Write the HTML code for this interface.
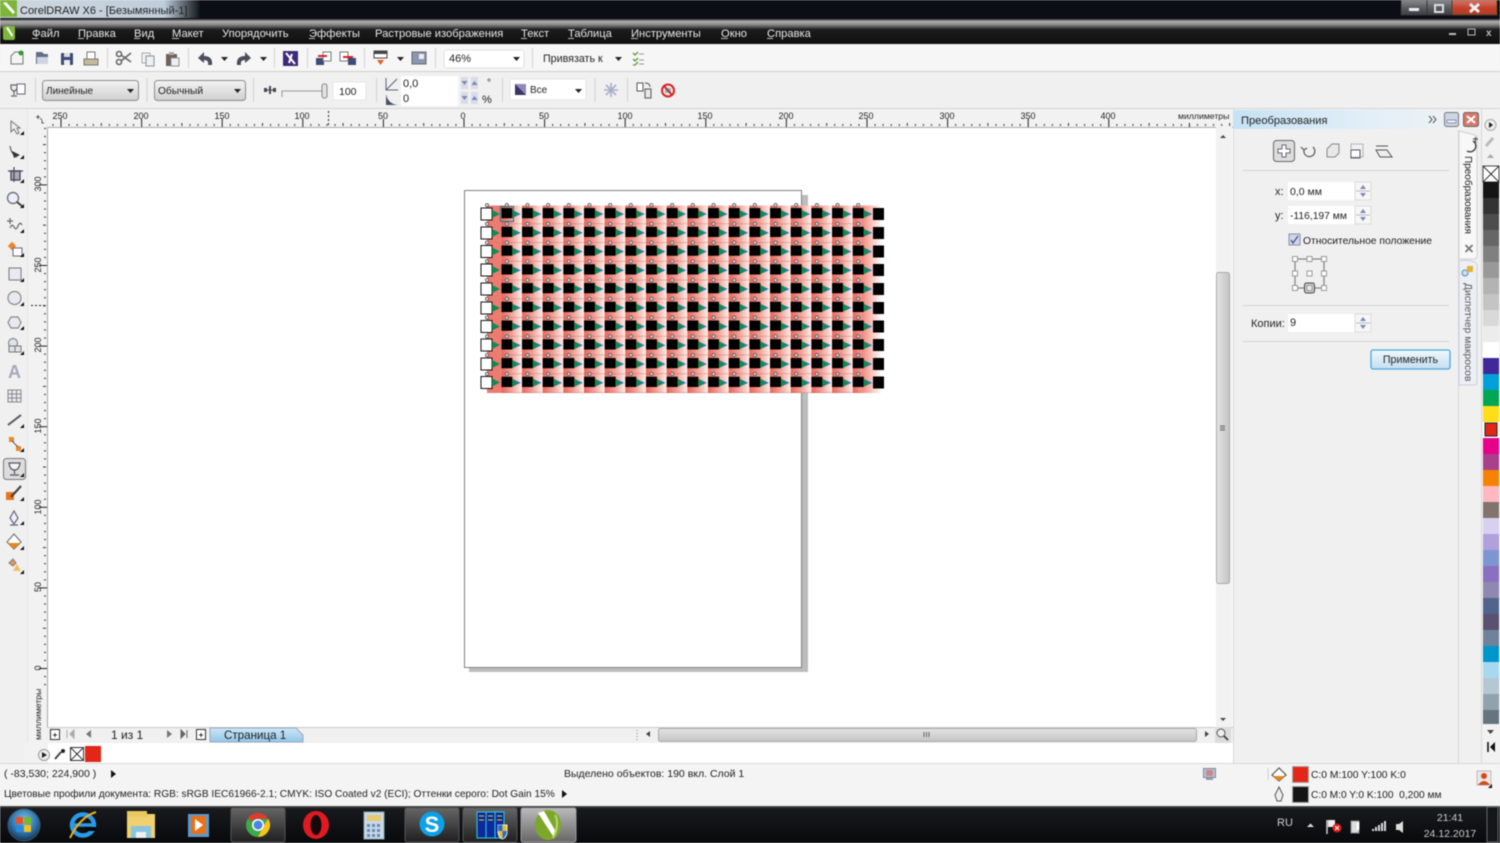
<!DOCTYPE html>
<html><head><meta charset="utf-8"><title>CorelDRAW X6</title>
<style>
html,body{margin:0;padding:0;width:1500px;height:843px;overflow:hidden;background:#f0f0f0}
svg{display:block;position:absolute;left:0;top:0;filter:blur(.45px)}
text{font-family:"Liberation Sans",sans-serif;font-size:11px;fill:#222}
.m{fill:#e8e8e8;font-size:11.2px}
.r{font-size:9px;fill:#222;text-anchor:middle}
.s{font-size:10.5px;fill:#222}
.i{stroke:#666;stroke-width:1.2;fill:none}
.sep{stroke:#d2d2d2;stroke-width:1}
</style></head><body>
<svg width="1500" height="843" viewBox="0 0 1500 843" xmlns="http://www.w3.org/2000/svg">
<defs>
<linearGradient id="menu" x1="0" y1="0" x2="0" y2="1"><stop offset="0" stop-color="#333"/><stop offset=".1" stop-color="#b0b0b0"/><stop offset=".22" stop-color="#8a8a8a"/><stop offset=".42" stop-color="#1c1c1c"/><stop offset="1" stop-color="#0f0f0f"/></linearGradient>
<linearGradient id="title" x1="0" y1="0" x2="1" y2="0"><stop offset="0" stop-color="#d8e2ea"/><stop offset=".82" stop-color="#c9d8e6"/><stop offset="1" stop-color="#11151b"/></linearGradient>
<linearGradient id="combo" x1="0" y1="0" x2="0" y2="1"><stop offset="0" stop-color="#f4f4f4"/><stop offset="1" stop-color="#cfcfcf"/></linearGradient>
<linearGradient id="panelT" x1="0" y1="0" x2="1" y2="0"><stop offset="0" stop-color="#c6e2f5"/><stop offset=".55" stop-color="#e2eff8"/><stop offset="1" stop-color="#f3f3f3"/></linearGradient>
<linearGradient id="tab" x1="0" y1="0" x2="0" y2="1"><stop offset="0" stop-color="#cde6f7"/><stop offset="1" stop-color="#93c7e8"/></linearGradient>
<linearGradient id="btn" x1="0" y1="0" x2="0" y2="1"><stop offset="0" stop-color="#f2f8fc"/><stop offset="1" stop-color="#c2dff2"/></linearGradient>
<linearGradient id="sb" x1="0" y1="0" x2="0" y2="1"><stop offset="0" stop-color="#e4e4e4"/><stop offset="1" stop-color="#c4c4c4"/></linearGradient>
<linearGradient id="sbv" x1="0" y1="0" x2="1" y2="0"><stop offset="0" stop-color="#e4e4e4"/><stop offset="1" stop-color="#c4c4c4"/></linearGradient>
<linearGradient id="wb" x1="0" y1="0" x2="0" y2="1"><stop offset="0" stop-color="#8b8d90"/><stop offset=".5" stop-color="#5a5d62"/><stop offset="1" stop-color="#3b3e44"/></linearGradient>
<linearGradient id="wc" x1="0" y1="0" x2="0" y2="1"><stop offset="0" stop-color="#d9776a"/><stop offset=".55" stop-color="#c2412a"/><stop offset="1" stop-color="#b03a28"/></linearGradient>
<linearGradient id="task" x1="0" y1="0" x2="0" y2="1"><stop offset="0" stop-color="#555"/><stop offset=".07" stop-color="#181a1e"/><stop offset="1" stop-color="#08090b"/></linearGradient>
<linearGradient id="act" x1="0" y1="0" x2="0" y2="1"><stop offset="0" stop-color="#666"/><stop offset="1" stop-color="#1f1f1f"/></linearGradient>
<linearGradient id="act2" x1="0" y1="0" x2="0" y2="1"><stop offset="0" stop-color="#bbb"/><stop offset="1" stop-color="#666"/></linearGradient>
<linearGradient id="cell" x1="0" y1="0" x2="1" y2="0"><stop offset="0" stop-color="#e8655a"/><stop offset=".5" stop-color="#f2a198"/><stop offset="1" stop-color="#feeeea"/></linearGradient>
<linearGradient id="fade" x1="0" y1="0" x2="1" y2="0"><stop offset="0" stop-color="#f08a7e"/><stop offset="1" stop-color="#fff"/></linearGradient>
<radialGradient id="orb" cx=".5" cy=".35" r=".7"><stop offset="0" stop-color="#7cc5ee"/><stop offset=".6" stop-color="#2a6fa8"/><stop offset="1" stop-color="#123"/></radialGradient>
<pattern id="rh" patternUnits="userSpaceOnUse" x="463.5" y="0" width="80.6" height="20">
<rect x="0" y="11" width="1" height="8" fill="#222"/>
<rect x="8.06" y="16" width="1" height="2" fill="#333"/><rect x="16.12" y="16" width="1" height="2" fill="#333"/><rect x="24.18" y="16" width="1" height="2" fill="#333"/><rect x="32.24" y="16" width="1" height="2" fill="#333"/><rect x="40.3" y="15" width="1" height="3" fill="#333"/><rect x="48.36" y="16" width="1" height="2" fill="#333"/><rect x="56.42" y="16" width="1" height="2" fill="#333"/><rect x="64.48" y="16" width="1" height="2" fill="#333"/><rect x="72.54" y="16" width="1" height="2" fill="#333"/>
</pattern>
<pattern id="rv" patternUnits="userSpaceOnUse" x="0" y="668" width="20" height="80.6">
<rect x="11" y="0" width="8" height="1" fill="#222"/>
<rect x="16" y="8.06" width="2" height="1" fill="#333"/><rect x="16" y="16.12" width="2" height="1" fill="#333"/><rect x="16" y="24.18" width="2" height="1" fill="#333"/><rect x="16" y="32.24" width="2" height="1" fill="#333"/><rect x="15" y="40.3" width="3" height="1" fill="#333"/><rect x="16" y="48.36" width="2" height="1" fill="#333"/><rect x="16" y="56.42" width="2" height="1" fill="#333"/><rect x="16" y="64.48" width="2" height="1" fill="#333"/><rect x="16" y="72.54" width="2" height="1" fill="#333"/>
</pattern>
<pattern id="pbg" patternUnits="userSpaceOnUse" x="522" y="205.5" width="20.67" height="18.75">
<rect width="20.67" height="18.75" fill="url(#cell)"/>
<rect y="17.8" width="20.67" height="1" fill="#a05a55" opacity=".35"/>
</pattern>
<pattern id="pfg" patternUnits="userSpaceOnUse" x="522" y="199.5" width="20.67" height="18.75">
<rect x="0" y="8.5" width="11" height="12" fill="#000"/>
<path d="M11 10.500 L19 14.500 L11 18.500Z" fill="#12894f"/>
<path d="M15 12.500 L19.500 14.500 L15 16.500Z" fill="#2a78b8"/>
<circle cx="5.5" cy="5.600" r="1.600" fill="#e8e8e8" stroke="#555" stroke-width=".8"/>
</pattern>
<g id="tri"><path d="M0 0h7l-3.500 4z" fill="#222"/></g>
<g id="cor"><path d="M4 0v4h-4z" fill="#111"/></g>
<g id="up"><path d="M-3 2 L0 -2 L3 2Z" fill="#7a86b8"/></g>
<g id="dn"><path d="M-3 -2 L0 2 L3 -2Z" fill="#7a86b8"/></g>
<g id="spin"><rect x="0" y="0" width="16" height="18" fill="#f6f6f6" stroke="#dcdcdc"/><line x1="1" y1="9" x2="15" y2="9" stroke="#bbb"/><use href="#up" x="8" y="5"/><use href="#dn" x="8" y="13"/></g>
</defs>

<!-- title bar -->
<rect width="1500" height="20" fill="#0b0e14"/>
<rect x="0" y="0" width="200" height="18" fill="url(#title)" opacity=".95"/>
<rect x="0" y="0" width="17" height="17" fill="#7db63a"/>
<path d="M3 3 L13 14 L15 12 L6 2Z" fill="#fff"/>
<text x="20" y="14" style="font-size:11px">CorelDRAW X6 - [Безымянный-1]</text>
<rect x="1401" y="0" width="26" height="15" fill="url(#wb)" stroke="#333"/>
<rect x="1427" y="0" width="25" height="15" fill="url(#wb)" stroke="#333"/>
<rect x="1452" y="0" width="45" height="15" fill="url(#wc)" stroke="#442"/>
<rect x="1409" y="8" width="10" height="3" fill="#eee"/>
<rect x="1435" y="5" width="8" height="7" fill="none" stroke="#ddd" stroke-width="2"/>
<path d="M1470 4 L1479 12 M1479 4 L1470 12" stroke="#eee" stroke-width="3"/>

<!-- menu -->
<rect y="19" width="1500" height="25" fill="url(#menu)"/>
<rect x="3" y="26" width="12" height="14" rx="2" fill="#7db63a"/>
<path d="M6 28 L12 37 L13 35 L8 27Z" fill="#fff"/>
<g class="mg">
<text class="m" x="32" y="37">Файл</text><text class="m" x="78" y="37">Правка</text><text class="m" x="134" y="37">Вид</text><text class="m" x="172" y="37">Макет</text><text class="m" x="222" y="37">Упорядочить</text><text class="m" x="309" y="37">Эффекты</text><text class="m" x="375" y="37">Растровые изображения</text><text class="m" x="521" y="37">Текст</text><text class="m" x="568" y="37">Таблица</text><text class="m" x="631" y="37">Инструменты</text><text class="m" x="721" y="37">Окно</text><text class="m" x="767" y="37">Справка</text>
</g>
<g fill="#bbb"><rect x="32" y="38" width="6" height="1"/><rect x="78" y="38" width="6" height="1"/><rect x="134" y="38" width="6" height="1"/><rect x="172" y="38" width="7" height="1"/><rect x="309" y="38" width="6" height="1"/><rect x="521" y="38" width="6" height="1"/><rect x="568" y="38" width="6" height="1"/><rect x="631" y="38" width="7" height="1"/><rect x="721" y="38" width="7" height="1"/><rect x="767" y="38" width="6" height="1"/></g>
<rect x="1449" y="33" width="7" height="2" fill="#bbb"/><rect x="1468" y="29" width="7" height="6" fill="none" stroke="#bbb"/><text x="1486" y="36" style="font-size:10px;font-weight:bold;fill:#bbb">x</text>

<!-- standard toolbar -->
<rect y="44" width="1500" height="27" fill="#f6f6f6"/>
<rect y="71" width="1500" height="1" fill="#cfcfcf"/>
<rect y="72" width="1500" height="36" fill="#f0f0f0"/>
<rect y="108" width="1500" height="1" fill="#d4d4d4"/>
<g class="sep"><line x1="107.5" y1="48" x2="107.5" y2="68"/><line x1="188.5" y1="48" x2="188.5" y2="68"/><line x1="274.5" y1="48" x2="274.5" y2="68"/><line x1="307.5" y1="48" x2="307.5" y2="68"/><line x1="364.5" y1="48" x2="364.5" y2="68"/><line x1="435.5" y1="48" x2="435.5" y2="68"/><line x1="532.5" y1="48" x2="532.5" y2="68"/></g>
<!-- new -->
<path d="M11 56 L15 52 H23 V64 H11Z" fill="#f4f4f4" stroke="#777"/><circle cx="21" cy="53" r="2.5" fill="#2aa02a"/>
<!-- open -->
<path d="M36 52 H42 L44 54 H48 V64 H36Z" fill="#5f6f8a"/><path d="M37 57 H48 V64 H37Z" fill="#cfd4de"/>
<!-- save -->
<rect x="61" y="53" width="12" height="12" rx="1" fill="#3e4a78"/><rect x="64" y="53" width="6" height="4" fill="#ddd"/><rect x="64" y="60" width="6" height="5" fill="#eee"/>
<!-- print -->
<rect x="84" y="59" width="14" height="6" fill="#c4ba9a" stroke="#777"/><rect x="87" y="52" width="8" height="7" fill="#fff" stroke="#777"/>
<!-- scissors -->
<g stroke="#666" stroke-width="1.6" fill="none"><circle cx="119" cy="62" r="2.5"/><circle cx="119" cy="54" r="2.5"/><path d="M121 55 L131 62 M121 61 L131 53"/></g>
<!-- copy/paste -->
<rect x="142" y="53" width="8" height="10" fill="#f2f2f2" stroke="#aaa"/><rect x="146" y="56" width="8" height="10" fill="#eef0f4" stroke="#8a8f9a"/>
<rect x="166" y="54" width="11" height="12" fill="#6e6258"/><rect x="169" y="52" width="5" height="3" fill="#aaa"/><rect x="171" y="58" width="8" height="8" fill="#eef0f4" stroke="#8a8f9a"/>
<!-- undo redo -->
<path d="M212 65 Q213 56 204 56 V52 L198 58 L204 63 V60 Q209 60 208 65Z" fill="#4a4f5c"/><use href="#tri" x="221" y="57"/>
<path d="M237 65 Q236 56 245 56 V52 L251 58 L245 63 V60 Q240 60 241 65Z" fill="#4a4f5c"/><use href="#tri" x="260" y="57"/>
<!-- purple -->
<rect x="283" y="51" width="15" height="15" fill="#3d2a78"/><path d="M286 53 L295 64 M292 54 L289 63" stroke="#fff" stroke-width="2"/>
<!-- import/export -->
<rect x="316" y="58" width="8" height="7" fill="#3e4a78"/><rect x="323" y="52" width="8" height="9" fill="#fff" stroke="#777"/><path d="M318 56 H327" stroke="#d22" stroke-width="2"/>
<rect x="348" y="58" width="8" height="7" fill="#3e4a78"/><rect x="340" y="52" width="8" height="9" fill="#fff" stroke="#777"/><path d="M343 57 H353" stroke="#d22" stroke-width="2"/>
<!-- publish -->
<rect x="374" y="51" width="13" height="7" fill="#fff" stroke="#444"/><rect x="374" y="51" width="13" height="3" fill="#444"/><path d="M377 60 L384 60 L380.5 65Z" fill="#e85a2a"/><use href="#tri" x="397" y="57"/>
<rect x="412" y="52" width="14" height="12" fill="#8b97b0" stroke="#667"/><rect x="419" y="54" width="5" height="5" fill="#eee"/>
<!-- zoom combo -->
<rect x="444" y="50" width="80" height="18" rx="2" fill="#fff" stroke="#e0e0e0"/>
<text x="449" y="62">46%</text><use href="#tri" x="513" y="57"/>
<text x="543" y="62" style="font-size:10.700px">Привязать к</text><use href="#tri" x="615" y="57"/>
<path d="M633 53 l2 2 l3-3 M633 59 l2 2 l3-3 M633 65 l2 0 l3-3" stroke="#5a9a3a" fill="none" stroke-width="1.3"/><path d="M639 54 H644 M639 60 H644 M639 64 H644" stroke="#999"/>

<!-- property bar -->
<g class="sep"><line x1="35.5" y1="78" x2="35.5" y2="102"/><line x1="147" y1="78" x2="147" y2="102"/><line x1="253.5" y1="78" x2="253.5" y2="102"/><line x1="376.5" y1="78" x2="376.5" y2="102"/><line x1="502.5" y1="78" x2="502.5" y2="102"/><line x1="595" y1="78" x2="595" y2="102"/><line x1="627.5" y1="78" x2="627.5" y2="102"/></g>
<path d="M11 85 H17 V88 Q16 91 14 91 Q12 91 11 88Z M14 91 V95 M11 96 H17" class="i"/><rect x="17" y="84" width="8" height="10" fill="#fff" stroke="#667"/>
<rect x="42.5" y="80.5" width="96" height="20" rx="3" fill="url(#combo)" stroke="#8c8c8c"/><text x="46" y="94" style="font-size:10px">Линейные</text><use href="#tri" x="127" y="89"/>
<rect x="154.5" y="80.5" width="91" height="20" rx="3" fill="url(#combo)" stroke="#8c8c8c"/><text x="158" y="94" style="font-size:10.200px">Обычный</text><use href="#tri" x="234" y="89"/>
<path d="M264 90 H275" stroke="#445" stroke-width="1"/><rect x="264" y="88" width="3" height="4" fill="#445"/><rect x="269" y="86" width="2" height="8" fill="#445"/><rect x="273" y="88" width="3" height="4" fill="#445"/>
<path d="M282 97 V91 H323" stroke="#999" fill="none"/><rect x="322" y="84" width="5" height="14" rx="2" fill="#e2e2e2" stroke="#888"/>
<rect x="333" y="82" width="33" height="18" fill="#fff" stroke="#e6e6e6"/><text x="339" y="95" style="font-size:10.500px">100</text>
<path d="M386 78 V90 H398 M386 90 L397 79" stroke="#5a6478" fill="none"/><path d="M386 94 V105 H398 Q388 104 386 94Z" fill="#4a5268"/>
<rect x="401" y="76" width="57" height="15" fill="#fff"/><rect x="401" y="91" width="57" height="15" fill="#fff"/>
<text x="403" y="87">0,0</text><text x="403" y="102">0</text>
<rect x="461" y="77" width="7" height="12" fill="#d8dce6"/><rect x="471" y="77" width="7" height="12" fill="#d8dce6"/><rect x="461" y="92" width="7" height="12" fill="#d8dce6"/><rect x="471" y="92" width="7" height="12" fill="#d8dce6"/>
<use href="#dn" x="464.5" y="83"/><use href="#up" x="474.5" y="83"/><use href="#dn" x="464.5" y="98"/><use href="#up" x="474.5" y="98"/>
<text x="487" y="86" style="font-size:10px">°</text><text x="482" y="103">%</text>
<rect x="510" y="79" width="76" height="21" rx="2" fill="#fff" stroke="#e4e4e4"/><rect x="515" y="84" width="11" height="11" fill="#3a3560"/><path d="M515 84 H526 V95Z" fill="#8f8ab8"/><text x="530" y="93" style="font-size:10px">Все</text><use href="#tri" x="575" y="89"/>
<g stroke="#a8aec8" stroke-width="1.6"><path d="M604 90 H618 M611 83 V97 M606 85 L616 95 M616 85 L606 95"/></g>
<rect x="637" y="83" width="6" height="8" fill="#fff" stroke="#555"/><rect x="645" y="89" width="6" height="9" fill="#e8e8e8" stroke="#555"/><path d="M645 83 Q650 83 650 87" stroke="#555" fill="none"/>
<circle cx="668" cy="90.5" r="6" fill="#eee" stroke="#dd2222" stroke-width="2"/><path d="M664 86 L672 95" stroke="#dd2222" stroke-width="2"/><rect x="665" y="88" width="6" height="5" fill="#666" opacity=".5"/>

<!-- main area -->
<rect y="109" width="28" height="654" fill="#f0f0f0"/>
<rect x="28" y="109" width="1205" height="18" fill="#f2f2f2"/>
<rect x="28" y="109" width="19" height="634" fill="#f2f2f2"/>
<rect x="47" y="127" width="1186" height="600" fill="#fff"/>
<g transform="translate(0,108)"><rect x="47" y="0" width="1186" height="19" fill="url(#rh)"/></g>
<rect x="47" y="127" width="1186" height="1" fill="#aaa"/>
<g transform="translate(28,0)"><rect x="0" y="127" width="19" height="600" fill="url(#rv)"/></g>
<rect x="47" y="127" width="1" height="600" fill="#aaa"/>
<g class="rl">
<text class="r" x="60" y="119">250</text><text class="r" x="141" y="119">200</text><text class="r" x="222" y="119">150</text><text class="r" x="302" y="119">100</text><text class="r" x="383" y="119">50</text><text class="r" x="463" y="119">0</text><text class="r" x="544" y="119">50</text><text class="r" x="625" y="119">100</text><text class="r" x="705" y="119">150</text><text class="r" x="786" y="119">200</text><text class="r" x="866" y="119">250</text><text class="r" x="947" y="119">300</text><text class="r" x="1028" y="119">350</text><text class="r" x="1108" y="119">400</text>
<rect x="1176" y="110" width="56" height="13" fill="#f2f2f2"/>
<text x="1178" y="119" style="font-size:8.700px">миллиметры</text>
<text class="r" transform="translate(41,184) rotate(-90)">300</text><text class="r" transform="translate(41,265) rotate(-90)">250</text><text class="r" transform="translate(41,345) rotate(-90)">200</text><text class="r" transform="translate(41,426) rotate(-90)">150</text><text class="r" transform="translate(41,507) rotate(-90)">100</text><text class="r" transform="translate(41,587) rotate(-90)">50</text><text class="r" transform="translate(41,668) rotate(-90)">0</text>
<rect x="33" y="689" width="13" height="52" fill="#f2f2f2"/>
<text transform="translate(41,740) rotate(-90)" style="font-size:8.700px">миллиметры</text>
</g>
<path d="M328.5 111 V127" stroke="#222" stroke-dasharray="2 2"/><path d="M31 305.5 H46" stroke="#222" stroke-dasharray="2 2"/>
<g stroke="#555" fill="none"><path d="M36 117 h4 M38 115 v4 M40 119 h2 M42 120 v3 h2"/></g>

<!-- page -->
<rect x="469" y="195" width="339" height="477" fill="#bdbdbd"/>
<rect x="464.5" y="190.5" width="337" height="477" fill="#fff" stroke="#808080"/>

<!-- artwork -->
<rect x="487" y="205.5" width="15" height="187.5" fill="#ec7b70"/>
<rect x="501.300" y="205.500" width="373" height="187.500" fill="url(#pbg)"/>
<rect x="862" y="205.5" width="20" height="187.5" fill="url(#fade)"/>
<rect x="501.330" y="199.500" width="372" height="187.500" fill="url(#pfg)"/>
<g fill="#fff" stroke="#111" stroke-width="1">
<rect x="481" y="208" width="11" height="12"/><rect x="481" y="227" width="11" height="12"/><rect x="481" y="245.500" width="11" height="12"/><rect x="481" y="264" width="11" height="12"/><rect x="481" y="283" width="11" height="12"/><rect x="481" y="302" width="11" height="12"/><rect x="481" y="320.500" width="11" height="12"/><rect x="481" y="339" width="11" height="12"/><rect x="481" y="358" width="11" height="12"/><rect x="481" y="376.500" width="11" height="12"/>
</g>
<g fill="#e8e8e8" stroke="#555" stroke-width=".8"><circle cx="487" cy="205.100" r="1.600"/><circle cx="487" cy="223.900" r="1.600"/><circle cx="487" cy="242.600" r="1.600"/><circle cx="487" cy="261.400" r="1.600"/><circle cx="487" cy="280.100" r="1.600"/><circle cx="487" cy="298.900" r="1.600"/><circle cx="487" cy="317.600" r="1.600"/><circle cx="487" cy="336.400" r="1.600"/><circle cx="487" cy="355.100" r="1.600"/><circle cx="487" cy="373.900" r="1.600"/></g>
<g fill="#12894f"><path d="M492 210 L500 214 L492 218Z"/><path d="M492 229 L500 233 L492 237Z"/><path d="M492 247.500 L500 251.500 L492 255.500Z"/><path d="M492 266 L500 270 L492 274Z"/><path d="M492 285 L500 289 L492 293Z"/><path d="M492 304 L500 308 L492 312Z"/><path d="M492 322.500 L500 326.500 L492 330.500Z"/><path d="M492 341 L500 345 L492 349Z"/><path d="M492 360 L500 364 L492 368Z"/><path d="M492 378.500 L500 382.500 L492 386.500Z"/></g>
<g fill="#000">
<rect x="873" y="208" width="11" height="12"/><rect x="873" y="227" width="11" height="12"/><rect x="873" y="245.500" width="11" height="12"/><rect x="873" y="264" width="11" height="12"/><rect x="873" y="283" width="11" height="12"/><rect x="873" y="302" width="11" height="12"/><rect x="873" y="320.500" width="11" height="12"/><rect x="873" y="339" width="11" height="12"/><rect x="873" y="358" width="11" height="12"/><rect x="873" y="376.500" width="11" height="12"/>
</g>
<rect x="500.5" y="206.5" width="13" height="15" fill="none" stroke="#2d6f7a" stroke-width="1"/>

<!-- toolbox icons -->
<g>
<path d="M11 121 V132 L14 129 L17 134 L19 133 L17 128 H20Z" fill="#eee" stroke="#777"/><use href="#cor" x="20" y="131"/>
<path d="M10 146 Q11 154 17 157" class="i"/><path d="M12 151 L20 155 L14 158Z" fill="#333"/><use href="#cor" x="20" y="155"/>
<rect x="11" y="171" width="9" height="9" fill="#aab" stroke="#445" stroke-width="1.3"/><path d="M8 171 H23 M14 167 V182" stroke="#445" stroke-width="1.2"/><use href="#cor" x="20" y="179"/>
<circle cx="13" cy="198" r="5.5" fill="#eef" stroke="#777" stroke-width="1.4"/><path d="M17 202 L22 206" stroke="#444" stroke-width="2"/><use href="#cor" x="20" y="204"/>
<path d="M7 221 h6 M10 218 v6 M10 228 q2-5 4-1 t4-1 t4-1" class="i"/><use href="#cor" x="20" y="229"/>
<rect x="9" y="243" width="6" height="6" fill="#e88a2a" transform="rotate(45 12 246)"/><rect x="13" y="248" width="9" height="8" fill="#fff" stroke="#667"/><use href="#cor" x="20" y="253"/>
<rect x="9" y="268" width="12" height="12" fill="#e8eaf2" stroke="#777"/><use href="#cor" x="20" y="278"/>
<circle cx="14.5" cy="298" r="6.5" fill="#e8eaf2" stroke="#888" stroke-width="1.2"/><use href="#cor" x="20" y="302"/>
<path d="M11 317 H18 L21 322.5 L18 328 H11 L8 322.5Z" fill="#e8eaf2" stroke="#888" stroke-width="1.2"/><use href="#cor" x="20" y="326"/>
<circle cx="13" cy="343" r="4.5" fill="#dfe2ea" stroke="#777"/><rect x="9" y="346" width="6" height="6" fill="#dfe2ea" stroke="#777"/><rect x="15" y="346" width="6" height="6" fill="#dfe2ea" stroke="#777"/><use href="#cor" x="20" y="351"/>
<text x="8" y="378" style="font-size:18px;fill:#a4a9bc;font-weight:bold">A</text>
<g fill="#e8eaf2" stroke="#888"><rect x="8" y="390" width="13" height="12"/><path d="M12 390 V402 M16.500 390 V402 M8 394 H21 M8 398 H21" fill="none"/></g>
<path d="M8 425 L21 415" stroke="#556" stroke-width="2"/><use href="#cor" x="20" y="424"/>
<rect x="9" y="437" width="5" height="5" fill="#e88a2a"/><rect x="16" y="446" width="5" height="5" fill="#e88a2a"/><path d="M12 441 L18 447" stroke="#556"/><use href="#cor" x="20" y="448"/>
<rect x="3.500" y="458.500" width="22" height="21" rx="3" fill="#dcdcdc" stroke="#777"/>
<path d="M9 463 H20 Q19 470 14.500 470 Q10 470 9 463Z M14.500 470 V474 M10 475 H19" fill="#f4f4f4" stroke="#556" stroke-width="1.2"/><use href="#cor" x="20" y="473"/>
<rect x="6" y="492" width="8" height="8" fill="#e8761a"/><path d="M11 497 L21 486" stroke="#444" stroke-width="2.200"/><use href="#cor" x="20" y="497"/>
<path d="M14 511 L18 518 L14 524 L10 518Z M10 525 H18" fill="#eef" stroke="#667" stroke-width="1.2"/><use href="#cor" x="20" y="521"/>
<path d="M7 542 L14 534 L21 542 L14 549Z" fill="#fff" stroke="#777" stroke-width="1.2"/><path d="M8 543 H20 L14 549Z" fill="#e8861a"/><use href="#cor" x="20" y="546"/>
<path d="M9 563 L13 559 L16 563 L13 566Z" fill="#e89a4a" stroke="#778"/><path d="M13 571 L17 564 L21 571Z" fill="#f0c060"/><use href="#cor" x="20" y="570"/>
</g>
<rect x="27" y="109" width="1" height="654" fill="#e4e4e4"/>

<!-- vertical scrollbar -->
<rect x="1216" y="127" width="16" height="600" fill="#f2f2f2"/>
<rect x="1216.500" y="272.500" width="13" height="311" rx="2" fill="url(#sbv)" stroke="#aaa"/>
<path d="M1220 426 h5 M1220 428 h5 M1220 430 h5" stroke="#666"/>
<path d="M1220 138 l3-3 l3 3z" fill="#444"/><path d="M1220 718 l3 3 l3-3z" fill="#444"/>

<!-- page nav & h scroll -->
<rect x="47" y="727" width="1186" height="16" fill="#f0f0f0"/>
<rect x="47" y="727" width="1186" height="1" fill="#c8c8c8"/>
<rect x="50.500" y="729.500" width="9" height="10" fill="#fff" stroke="#333"/><path d="M53 735 h4 M55 733 v4" stroke="#333"/>
<path d="M67 730 v8 M74 730 l-4 4 l4 4z" stroke="#aaa" fill="#aaa"/><path d="M91 730 l-5 4 l5 4z" fill="#777"/>
<text x="111" y="739" style="font-size:12px">1 из 1</text>
<path d="M167 730 l5 4 l-5 4z" fill="#777"/><path d="M181 730 l4 4 l-4 4z M187 730 v8" stroke="#666" fill="#666"/>
<rect x="196.500" y="729.500" width="9" height="10" fill="#fff" stroke="#333"/><path d="M199 735 h4 M201 733 v4" stroke="#333"/>
<path d="M210 728 H296 L303 735 V742 H210Z" fill="url(#tab)" stroke="#9ab"/>
<text x="224" y="739" style="font-size:11.600px">Страница 1</text>
<path d="M637 730 v12" stroke="#888" stroke-dasharray="1 2"/>
<path d="M650 731 l-4 3 l4 3z" fill="#444"/>
<rect x="658.500" y="728.500" width="538" height="13" rx="2" fill="url(#sb)" stroke="#aaa"/>
<path d="M924 732 v5 M926.500 732 v5 M929 732 v5" stroke="#666"/>
<path d="M1205 731 l4 3 l-4 3z" fill="#444"/>
<rect x="1215" y="727" width="16" height="16" fill="#dcdcdc"/><circle cx="1221" cy="733" r="4" fill="#eee" stroke="#555"/><path d="M1224 736 l4 4" stroke="#333" stroke-width="1.6"/>

<!-- doc palette -->
<rect x="24" y="743" width="1209" height="20" fill="#fff"/>
<rect x="24" y="743" width="24" height="20" fill="#f2f2f2"/>
<circle cx="44" cy="755" r="5.500" fill="#eee" stroke="#999"/><path d="M42 752 l5 3 l-5 3z" fill="#222"/>
<path d="M55 759 L61 752" stroke="#445" stroke-width="2"/><circle cx="63" cy="751" r="2" fill="#222"/>
<rect x="70.500" y="747.500" width="13" height="13" fill="#fff" stroke="#333"/><path d="M71 748 L83 760 M83 748 L71 760" stroke="#333"/>
<rect x="85" y="746" width="16" height="16" fill="#e22618"/>

<!-- status bar -->
<rect y="763" width="1500" height="1" fill="#d8d8d8"/>
<rect y="764" width="1500" height="42" fill="#f4f4f4"/>
<text class="s" x="4" y="777">( -83,530; 224,900 )</text>
<path d="M111 770 l5 4 l-5 4z" fill="#111"/>
<text class="s" x="564" y="777">Выделено объектов: 190 вкл. Слой 1</text>
<text x="4" y="797" style="font-size:10.170px">Цветовые профили документа: RGB: sRGB IEC61966-2.1; CMYK: ISO Coated v2 (ECI); Оттенки серого: Dot Gain 15%</text>
<path d="M562 790 l5 4 l-5 4z" fill="#111"/>
<rect x="1203.500" y="768.500" width="12" height="9" fill="#b8c4d4" stroke="#7a8aa0"/><rect x="1206" y="770" width="7" height="6" fill="#c88"/><rect x="1206" y="778" width="7" height="2" fill="#99a"/>
<line x1="1268" y1="768" x2="1268" y2="780" stroke="#d0d0d0"/>
<path d="M1272 775 L1279 768 L1286 775 L1279 781Z" fill="#fff" stroke="#555" stroke-width="1.200"/><path d="M1273 776 H1285 L1279 781Z" fill="#e8861a"/>
<rect x="1292.500" y="766.500" width="16" height="16" fill="#e22618" stroke="#aaa"/>
<text x="1311" y="778" style="font-size:10.300px">C:0 M:100 Y:100 K:0</text>
<path d="M1279 787 L1283 795 L1281 801 H1277 L1275 795Z" fill="#eee" stroke="#555"/>
<rect x="1292.500" y="786.500" width="16" height="16" fill="#151515" stroke="#aaa"/>
<text x="1311" y="798" style="font-size:10.200px" xml:space="preserve">C:0 M:0 Y:0 K:100  0,200 мм</text>
<rect x="1477" y="771" width="14" height="14" fill="#e8e8e8" stroke="#bbb"/><circle cx="1484" cy="776" r="3" fill="#d8481e"/><path d="M1478 785 Q1484 777 1490 785Z" fill="#d8481e"/><use href="#cor" x="1488" y="784"/>

<!-- panel -->
<rect x="1233" y="109" width="225" height="654" fill="#f0f0f0"/>
<rect x="1233" y="109" width="1" height="654" fill="#d8d8d8"/>
<rect x="1458" y="109" width="24" height="654" fill="#f0f0f0"/>
<rect x="1458" y="130" width="1" height="633" fill="#d8d8d8"/>
<rect x="1481" y="109" width="1" height="654" fill="#d8d8d8"/>
<rect x="1233" y="110" width="248" height="19" fill="url(#panelT)"/>
<text x="1241" y="124" style="font-size:11.100px">Преобразования</text>
<path d="M1429 116 l3 3.500 l-3 3.500 M1433 116 l3 3.500 l-3 3.500" stroke="#555" fill="none"/>
<rect x="1444.500" y="112.500" width="14" height="14" rx="2" fill="#cbd5e4" stroke="#777"/><rect x="1447" y="120" width="9" height="3" fill="#eef" stroke="#667" stroke-width=".6"/>
<rect x="1463.500" y="112.500" width="15" height="14" rx="2" fill="#d9776a" stroke="#666"/><path d="M1467 116 l8 7 M1475 116 l-8 7" stroke="#fff" stroke-width="2"/>
<rect x="1273.500" y="140.500" width="21" height="21" rx="3" fill="#dcdcdc" stroke="#666"/>
<path d="M1278 149 h4 v-4 h4 v4 h4 v4 h-4 v4 h-4 v-4 h-4z" fill="#fff" stroke="#667"/>
<path d="M1313 147 A5.500 5.500 0 1 1 1304 150 M1301 147 l3 3 l3-2" fill="none" stroke="#555" stroke-width="1.200"/>
<path d="M1327 149 l5-5 h7 v9 l-4 4 h-8z" fill="#e8e8e8" stroke="#888"/>
<rect x="1351" y="150" width="9" height="8" fill="#fff" stroke="#556"/><rect x="1351" y="144" width="12" height="13" fill="none" stroke="#777" stroke-dasharray="1 1"/>
<path d="M1376 150 h11 l5 7 h-12z M1376 146 h12" fill="#eee" stroke="#555"/>
<line x1="1243" y1="170.500" x2="1449" y2="170.500" stroke="#d4d4d4"/>
<text x="1275" y="195">x:</text><rect x="1288" y="182" width="67" height="18" fill="#fff"/><text x="1290" y="195" style="font-size:10.500px">0,0 мм</text><use href="#spin" x="1355" y="182"/>
<text x="1275" y="219">y:</text><rect x="1288" y="206" width="67" height="18" fill="#fff"/><text x="1290" y="219" style="font-size:10.300px">-116,197 мм</text><use href="#spin" x="1355" y="206"/>
<rect x="1289" y="234" width="11" height="11" fill="#cfd6e8" stroke="#8a90a8"/><path d="M1291 240 l2 3 l5-7" stroke="#4a5a9a" fill="none" stroke-width="1.400"/>
<text x="1303" y="244" style="font-size:10.300px">Относительное положение</text>
<rect x="1295" y="259" width="29" height="29" fill="none" stroke="#888" stroke-width="1.300"/>
<g fill="#fff" stroke="#999"><rect x="1292.500" y="256.500" width="5" height="5"/><rect x="1307" y="256.500" width="5" height="5"/><rect x="1321.500" y="256.500" width="5" height="5"/><rect x="1292.500" y="271" width="5" height="5"/><rect x="1307" y="271" width="5" height="5"/><rect x="1321.500" y="271" width="5" height="5"/><rect x="1292.500" y="285.500" width="5" height="5"/><rect x="1321.500" y="285.500" width="5" height="5"/></g>
<rect x="1304.500" y="283" width="10" height="10" rx="2" fill="#ccc" stroke="#444"/><rect x="1307" y="285.500" width="5" height="5" fill="#eee" stroke="#999"/>
<line x1="1243" y1="305.500" x2="1449" y2="305.500" stroke="#d4d4d4"/>
<text x="1251" y="327">Копии:</text><rect x="1288" y="314" width="67" height="18" fill="#fff"/><text x="1290" y="326">9</text><use href="#spin" x="1355" y="314"/>
<line x1="1243" y1="341.500" x2="1449" y2="341.500" stroke="#d4d4d4"/>
<rect x="1371" y="350" width="79" height="19" rx="2" fill="url(#btn)" stroke="#4aa8dc" stroke-width="1.300"/>
<text x="1410.500" y="363" text-anchor="middle" style="font-size:10.700px">Применить</text>

<!-- docker tabs -->
<path d="M1459 131 L1475 135 Q1477 136 1477 138 V256 Q1477 259 1474 259 H1459Z" fill="#f8f8f8" stroke="#d0d0d0"/>
<path d="M1473 141 A5 5 0 1 1 1467 151" fill="none" stroke="#444" stroke-width="1.400"/><path d="M1473 139 h5 M1475.500 137 v6" stroke="#556" stroke-width="1.200"/>
<text transform="translate(1465,156) rotate(90)" style="font-size:10px">Преобразования</text>
<path d="M1465.500 245 l7 7 M1472.500 245 l-7 7" stroke="#777" stroke-width="1.800"/>
<path d="M1459 261 Q1475 259 1477 265 V382 Q1477 385 1474 385 H1459Z" fill="#ecf0f5" stroke="#ccd"/>
<circle cx="1465" cy="273" r="3" fill="#cfe0f5" stroke="#58a"/><rect x="1467" y="266" width="6" height="6" fill="#e8b030"/>
<text transform="translate(1465,283) rotate(90)" style="font-size:10.300px;fill:#555">Диспетчер макросов</text>

<!-- palette -->
<rect x="1482" y="109" width="18" height="654" fill="#f2f2f2"/>
<circle cx="1490.500" cy="125" r="5.500" fill="#eee" stroke="#aaa"/><path d="M1489 122 l4 3 l-4 3z" fill="#222"/>
<path d="M1486 146 L1493 138" stroke="#bbb" stroke-width="3"/>
<path d="M1487 158 h7 l-3.500-4z" fill="#aaa"/>
<rect x="1483" y="166" width="16" height="16" fill="#fff" stroke="#444"/><path d="M1483 166 l16 16 m0-16 l-16 16" stroke="#333"/>
<g>
<rect x="1483" y="182" width="16" height="16" fill="#151515"/><rect x="1483" y="198" width="16" height="16" fill="#333"/><rect x="1483" y="214" width="16" height="16" fill="#4d4d4d"/><rect x="1483" y="230" width="16" height="16" fill="#666"/><rect x="1483" y="246" width="16" height="16" fill="#808080"/><rect x="1483" y="262" width="16" height="16" fill="#999"/><rect x="1483" y="278" width="16" height="16" fill="#b3b3b3"/><rect x="1483" y="294" width="16" height="16" fill="#c4c4c4"/><rect x="1483" y="310" width="16" height="16" fill="#d9d9d9"/><rect x="1483" y="326" width="16" height="16" fill="#ececec"/><rect x="1483" y="342" width="16" height="16" fill="#fff"/>
<rect x="1483" y="358" width="16" height="16" fill="#40289a"/><rect x="1483" y="374" width="16" height="16" fill="#00a0d8"/><rect x="1483" y="390" width="16" height="16" fill="#00a651"/><rect x="1483" y="406" width="16" height="16" fill="#ffde17"/><rect x="1483" y="422" width="16" height="16" fill="#fff"/><rect x="1485" y="423" width="12" height="13" fill="#e22618" stroke="#222"/><rect x="1483" y="438" width="16" height="16" fill="#e6008a"/><rect x="1483" y="454" width="16" height="16" fill="#a8408c"/><rect x="1483" y="470" width="16" height="16" fill="#f58200"/><rect x="1483" y="486" width="16" height="16" fill="#ffb8c0"/><rect x="1483" y="502" width="16" height="16" fill="#82746c"/><rect x="1483" y="518" width="16" height="16" fill="#d8d0f0"/><rect x="1483" y="534" width="16" height="16" fill="#b0a0dc"/><rect x="1483" y="550" width="16" height="16" fill="#7d95d0"/><rect x="1483" y="566" width="16" height="16" fill="#8a70c0"/><rect x="1483" y="582" width="16" height="16" fill="#8f88b0"/><rect x="1483" y="598" width="16" height="16" fill="#50648c"/><rect x="1483" y="614" width="16" height="16" fill="#5a5070"/><rect x="1483" y="630" width="16" height="16" fill="#6e829c"/><rect x="1483" y="646" width="16" height="16" fill="#0095cc"/><rect x="1483" y="662" width="16" height="16" fill="#a8d8f0"/><rect x="1483" y="678" width="16" height="16" fill="#b4c8d4"/><rect x="1483" y="694" width="16" height="16" fill="#90a2ae"/><rect x="1483" y="710" width="16" height="14" fill="#66747e"/>
</g>
<path d="M1487 730 h7 l-3.500 4z" fill="#444"/>
<path d="M1488 742 v10" stroke="#111" stroke-width="1.600"/><path d="M1495 742 l-5 5 l5 5z" fill="#111"/>

<!-- taskbar -->
<rect y="806" width="1500" height="37" fill="url(#task)"/>
<rect x="231" y="808" width="54" height="34" rx="2" fill="url(#act)" stroke="#555"/>
<rect x="405" y="808" width="54" height="34" rx="2" fill="url(#act)" stroke="#555"/>
<rect x="463" y="808" width="54" height="34" rx="2" fill="url(#act)" stroke="#555"/>
<rect x="521" y="808" width="55" height="34" rx="2" fill="url(#act2)" stroke="#999"/>
<!-- start -->
<circle cx="24" cy="825" r="16" fill="url(#orb)" stroke="#456"/>
<rect x="16" y="817" width="7" height="7" fill="#e8502a"/><rect x="24" y="817" width="7" height="7" fill="#7ab82a"/><rect x="16" y="825" width="7" height="7" fill="#2a8ae0"/><rect x="24" y="825" width="7" height="7" fill="#f0c020"/>
<!-- IE -->
<ellipse cx="83" cy="825" rx="11" ry="10.500" fill="none" stroke="#2a9ae8" stroke-width="4.500"/>
<path d="M72 825 H94" stroke="#2a9ae8" stroke-width="3.500"/>
<rect x="85" y="827" width="11" height="4" fill="#08090b"/>
<path d="M70 838 Q80 817 96 812" fill="none" stroke="#e8b020" stroke-width="2"/>
<!-- explorer -->
<path d="M127 814 H155 V838 H127Z" fill="#f0d070"/><rect x="127" y="811" width="20" height="6" fill="#e8c860"/><rect x="131" y="826" width="20" height="12" fill="#8ac4e0"/><rect x="136" y="832" width="10" height="6" fill="#f0f0f0"/>
<!-- media -->
<rect x="188" y="814" width="21" height="23" fill="#5a9ad0"/><rect x="191" y="816" width="15" height="18" fill="#e8721a"/><path d="M195 819 l8 6 l-8 6z" fill="#fff"/>
<!-- chrome -->
<circle cx="258" cy="825" r="12" fill="#3ea84a"/><path d="M258 813 A12 12 0 0 1 268.400 819 H258 A6 6 0 0 0 252 821 L247.600 819 A12 12 0 0 1 258 813Z" fill="#dd3b2c"/><path d="M268.400 819 A12 12 0 0 1 258 837 L264 825 Z" fill="#f6c31c"/><circle cx="258" cy="825" r="6" fill="#fff"/><circle cx="258" cy="825" r="4.500" fill="#4a86e8"/>
<!-- opera -->
<ellipse cx="316" cy="825" rx="13" ry="14" fill="#e01a22"/><ellipse cx="316" cy="825" rx="5.500" ry="10" fill="#16090b"/>
<!-- calc -->
<rect x="364" y="812" width="20" height="27" fill="#c8d8e8" stroke="#8aa"/><rect x="367" y="815" width="14" height="6" fill="#e8c870"/><g fill="#6a8ab0"><rect x="367" y="824" width="3" height="3"/><rect x="372" y="824" width="3" height="3"/><rect x="377" y="824" width="3" height="3"/><rect x="367" y="829" width="3" height="3"/><rect x="372" y="829" width="3" height="3"/><rect x="377" y="829" width="3" height="3"/><rect x="367" y="834" width="3" height="3"/><rect x="372" y="834" width="3" height="3"/><rect x="377" y="834" width="3" height="3"/></g>
<!-- skype -->
<circle cx="432" cy="824" r="12.500" fill="#0ea0e8"/><text x="432" y="832" text-anchor="middle" style="font-size:22px;font-weight:bold;fill:#fff">S</text>
<!-- blue app -->
<rect x="477" y="812" width="27" height="26" fill="#0c2a9a" stroke="#2ad0e0"/><path d="M486 812 V838 M495 812 V838" stroke="#2ad0e0"/><path d="M479 816 h5 M479 820 h5 M488 816 h5 M488 820 h5 M497 816 h5 M497 820 h5" stroke="#e8d020"/>
<path d="M498 825 h9 v8 q-1 5-4.500 6 q-3.500-1-4.500-6z" fill="#e8c020" stroke="#eee"/><path d="M498 825 h4.500 v6 h-4.500z M502.500 831 h4.500 q-1 6-4.500 8z" fill="#2a6ad0"/>
<!-- corel -->
<ellipse cx="548" cy="825" rx="13" ry="15" fill="#7ca82a"/><path d="M538 813 L553 836 L556 832 L544 811Z" fill="#fff"/><path d="M555 815 Q560 824 553 838" stroke="#b8d870" fill="none" stroke-width="2"/>
<!-- tray -->
<text x="1277" y="826" style="fill:#ccc;font-size:11px">RU</text>
<path d="M1307 827 h7 l-3.500-3.500z" fill="#ddd"/>
<path d="M1327 820 V834" stroke="#ddd" stroke-width="1.400"/><path d="M1328 820 h7 v7 h-7z" fill="#eee"/><circle cx="1337" cy="828" r="4.500" fill="#d81818"/><path d="M1335 826 l4 4 m0-4 l-4 4" stroke="#fff"/>
<rect x="1351" y="821" width="8" height="12" fill="#ddd" stroke="#888"/><path d="M1358 822 v8" stroke="#fff" stroke-width="2.500"/>
<g fill="#ddd"><rect x="1372" y="829" width="2" height="2"/><rect x="1375" y="827" width="2" height="4"/><rect x="1378" y="825" width="2" height="6"/><rect x="1381" y="823" width="2" height="8"/><rect x="1384" y="821" width="2" height="10"/></g>
<path d="M1396 824 h3 l4-3 v12 l-4-3 h-3z" fill="#ddd"/>
<text x="1450" y="821" text-anchor="middle" style="fill:#ccc;font-size:10.500px">21:41</text>
<text x="1450" y="837" text-anchor="middle" style="fill:#ccc;font-size:10.500px">24.12.2017</text>
<rect x="1487" y="807" width="11" height="35" fill="#14161a" stroke="#666"/>
</svg>
</body></html>
